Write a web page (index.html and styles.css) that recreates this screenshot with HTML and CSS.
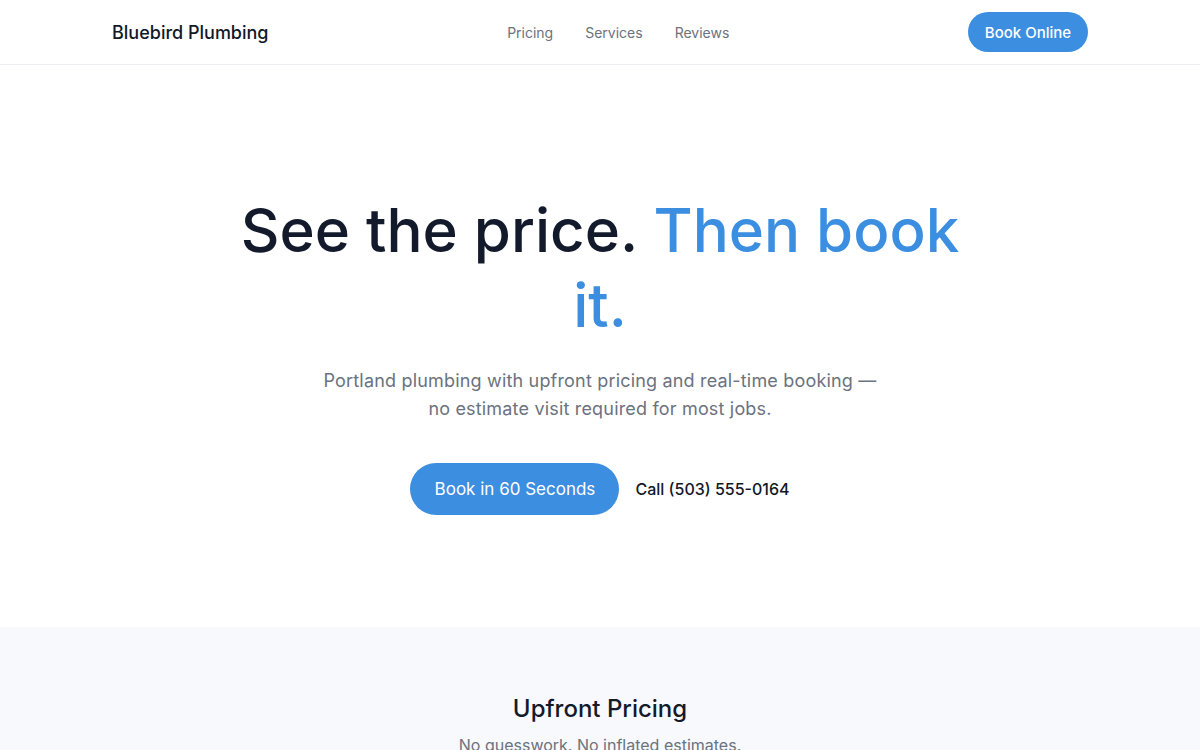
FILE: index.html
```
<!DOCTYPE html>
<html lang="en">
<head>
<meta charset="utf-8">
<title>Bluebird Plumbing</title>
<link rel="stylesheet" href="styles.css">
</head>
<body>
<header class="site-header">
  <div class="container header-inner">
    <a class="logo" href="#">Bluebird Plumbing</a>
    <nav class="nav">
      <a href="#">Pricing</a>
      <a href="#">Services</a>
      <a href="#">Reviews</a>
    </nav>
    <a class="btn btn-sm" href="#">Book Online</a>
  </div>
</header>
<main>
  <section class="hero">
    <h1 class="hero-title">See the price. <span class="accent">Then book it.</span></h1>
    <p class="hero-sub">Portland plumbing with upfront pricing and real-time booking — no estimate visit required for most jobs.</p>
    <div class="hero-actions">
      <a class="btn btn-lg" href="#">Book in 60 Seconds</a>
      <a class="call" href="#">Call (503) 555-0164</a>
    </div>
  </section>
  <section class="pricing">
    <h2 class="section-title">Upfront Pricing</h2>
    <p class="section-sub">No guesswork. No inflated estimates.</p>
  </section>
</main>
</body>
</html>
```
FILE: styles.css
```
* { box-sizing: border-box; }
html, body { margin: 0; padding: 0; }
body {
  font-family: Inter, "Noto Sans", sans-serif;
  color: #111827;
  background: #fff;
}
a { text-decoration: none; color: inherit; }

.container {
  max-width: 1024px;
  margin: 0 auto;
  padding: 0 24px;
}
.site-header {
  border-bottom: 1px solid #eceef1;
}
.header-inner {
  height: 64px;
  display: flex;
  align-items: center;
  justify-content: space-between;
}
.logo {
  font-size: 18px;
  font-weight: 500;
  color: #111827;
  letter-spacing: 0;
}
.nav {
  display: flex;
  gap: 32px;
  font-size: 14px;
  color: #6b7280;
}
.btn {
  display: inline-flex;
  align-items: center;
  justify-content: center;
  background: #3c8ee0;
  color: #fff;
  border-radius: 999px;
  font-weight: 500;
}
.btn-sm {
  height: 40px;
  width: 120px;
  font-size: 15px;
}
.hero {
  padding: 128px 24px 112px;
  text-align: center;
}
.hero-title {
  margin: 0 auto;
  max-width: 740px;
  font-size: 60px;
  line-height: 75px;
  font-weight: 500;
  color: #131a2b;
  letter-spacing: 0;
}
.accent { color: #3c8ee0; }
.hero-sub {
  margin: 24px auto 0;
  max-width: 570px;
  font-size: 18px;
  line-height: 28px;
  letter-spacing: 0.01em;
  color: #6b7280;
}
.hero-actions {
  margin-top: 40px;
  display: flex;
  justify-content: center;
  align-items: center;
  gap: 16px;
}
.btn-lg {
  height: 52px;
  width: 209px;
  font-size: 17px;
  font-weight: 400;
}
.call {
  font-size: 16px;
  font-weight: 500;
  color: #111827;
}
.pricing {
  background: #f7f9fc;
  padding: 64px 24px 64px;
  text-align: center;
}
.section-title {
  margin: 0;
  font-size: 24px;
  line-height: 36px;
  font-weight: 500;
  color: #131a2b;
}
.section-sub {
  margin: 8px 0 0;
  font-size: 16px;
  color: #6b7280;
}
```
